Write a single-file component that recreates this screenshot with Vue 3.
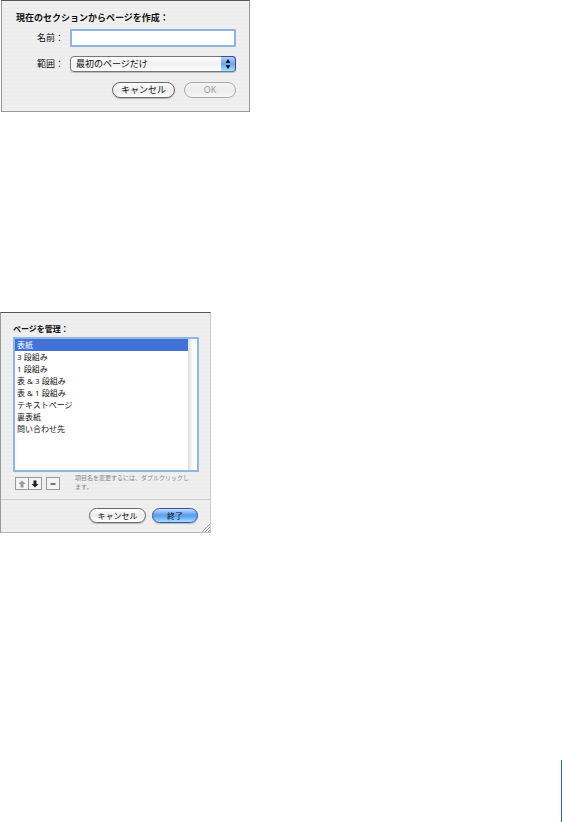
<template>
  <div class="page">
    <main class="sheets">
      <form class="sheet create-sheet" @submit.prevent>
        <h2 class="sheet-title">現在のセクションからページを作成：</h2>
        <div class="field">
          <label for="page-name">名前：</label>
          <input id="page-name" v-model="name" class="name-input" type="text" />
        </div>
        <div class="field range-field">
          <label for="page-range">範囲：</label>
          <div class="popup">
            <select id="page-range" v-model="range">
              <option v-for="item in ranges" :key="item">{{ item }}</option>
            </select>
            <svg class="popup-arrows" viewBox="0 0 14 14" aria-hidden="true">
              <path d="M7 2 9.3 5.8H4.7zM7 12 9.3 8.2H4.7z" />
            </svg>
          </div>
        </div>
        <div class="actions">
          <button class="btn cancel" type="button">キャンセル</button>
          <button class="btn" type="submit" :disabled="!name">OK</button>
        </div>
      </form>

      <section class="sheet manage-sheet">
        <h2 id="manage-title" class="sheet-title">ページを管理：</h2>
        <div class="list-box">
          <ul class="page-list" role="listbox" aria-labelledby="manage-title">
            <li
              v-for="(page, index) in pages"
              :key="page"
              role="option"
              :aria-selected="index === selected"
              :class="{ selected: index === selected }"
              @click="selected = index"
            >
              {{ page }}
            </li>
          </ul>
          <div class="scroll-track"></div>
        </div>
        <div class="tools">
          <div class="order-buttons">
            <button class="tool" type="button" aria-label="上へ" :disabled="selected === 0" @click="move(-1)">
              <svg viewBox="0 0 10 10"><path d="M5 1.5 8.5 5H6.5v3.5h-3V5h-2z" /></svg>
            </button>
            <button class="tool" type="button" aria-label="下へ" @click="move(1)">
              <svg viewBox="0 0 10 10"><path d="M5 8.5 8.5 5H6.5V1.5h-3V5h-2z" /></svg>
            </button>
          </div>
          <button class="tool" type="button" aria-label="削除" @click="remove">
            <svg viewBox="0 0 10 10"><path d="M2.5 4.4h5v1.2h-5z" /></svg>
          </button>
          <p class="hint">項目名を変更するには、ダブルクリックし<br />ます。</p>
        </div>
        <div class="actions">
          <button class="btn cancel" type="button">キャンセル</button>
          <button class="btn primary" type="button">終了</button>
        </div>
        <svg class="resizer" viewBox="0 0 8 8" aria-hidden="true">
          <path d="M0 8 8 0M3 8 8 3M6 8 8 6" />
        </svg>
      </section>
    </main>
    <div class="margin-rule"></div>
  </div>
</template>

<script setup>
import { ref } from 'vue'

const name = ref('')
const ranges = ['最初のページだけ', 'すべてのページ']
const range = ref(ranges[0])

const pages = ref([
  '表紙',
  '3 段組み',
  '1 段組み',
  '表 & 3 段組み',
  '表 & 1 段組み',
  'テキストページ',
  '裏表紙',
  '問い合わせ先'
])
const selected = ref(0)

const move = (step) => {
  const target = selected.value + step
  if (target < 0 || target >= pages.value.length) return
  const [page] = pages.value.splice(selected.value, 1)
  pages.value.splice(target, 0, page)
  selected.value = target
}

const remove = () => {
  pages.value.splice(selected.value, 1)
  selected.value = Math.max(0, Math.min(selected.value, pages.value.length - 1))
}
</script>

<style>
body {
  margin: 0;
  background: #fff;
}
</style>

<style scoped>
.page {
  display: flex;
  justify-content: space-between;
  min-height: 100vh;
  font-family: "Open Sans", "Noto Sans CJK JP", sans-serif;
  color: #111;
}

.sheets {
  display: flex;
  flex-direction: column;
  align-items: flex-start;
  gap: 200px;
}

.sheet {
  position: relative;
  box-sizing: border-box;
  max-width: 100%;
  border: 1px solid #999;
  border-top-color: #555;
  background: repeating-linear-gradient(#f0f0f0 0 2px, #ececec 2px 4px);
}

.sheet-title {
  margin: 0;
  font-size: inherit;
  line-height: 12px;
  font-weight: 700;
}

.create-sheet {
  width: 249px;
  margin-left: 1px;
  padding: 11px 13px 13px 14px;
  font-size: 9px;
}

/* 入力欄 */
.field {
  display: flex;
  align-items: center;
  margin-top: 5px;
  line-height: 12px;
}

.field label {
  width: 54px;
  padding-left: 21px;
  box-sizing: border-box;
  flex: none;
}

.name-input {
  flex: 1;
  min-width: 0;
  height: 18px;
  box-sizing: border-box;
  padding: 0 4px;
  border: 2px solid #8fb4de;
  border-radius: 1px;
  background: #fff;
  font: inherit;
  outline: none;
}

.range-field {
  margin-top: 9px;
}

.popup {
  position: relative;
  flex: 1;
  height: 16px;
}

.popup select {
  display: block;
  appearance: none;
  width: 100%;
  height: 16px;
  box-sizing: border-box;
  padding: 0 18px 0 5px;
  border: 1px solid #777;
  border-radius: 4px;
  background: linear-gradient(#fff, #f0f0f0 50%, #fff);
  box-shadow: 0 1px 1px #bbb;
  color: inherit;
  font: inherit;
}

.popup-arrows {
  position: absolute;
  top: 0;
  right: 0;
  width: 15px;
  height: 16px;
  box-sizing: border-box;
  border: 1px solid #3a4aa8;
  border-left: 0;
  border-bottom-color: #5f7fa8;
  border-radius: 0 4px 4px 0;
  background: linear-gradient(#b5d2f7, #66a6ee 50%, #a8e0ff);
  pointer-events: none;
}

/* ボタン */
.actions {
  display: flex;
  justify-content: flex-end;
  gap: 9px;
  margin-top: 10px;
}

.btn {
  width: 52px;
  height: 16px;
  padding: 0;
  border: 1px solid #666;
  border-radius: 8px;
  background: linear-gradient(#fff, #ececec 50%, #fff);
  box-shadow: 0 1px 1px #bbb;
  color: #111;
  font: inherit;
  line-height: 12px;
}

.btn.cancel {
  width: 63px;
}

.btn:disabled {
  border-color: #aaa;
  background: linear-gradient(#f5f5f5, #ececec 50%, #f7f7f7);
  box-shadow: none;
  color: #999;
}

.btn.primary {
  border-color: #3c4fa8;
  background: linear-gradient(#c8defa, #5c9fec 45%, #62a8f2 60%, #a6e0ff);
}

/* ページ管理 */
.manage-sheet {
  width: 211px;
  padding: 10px 12px 9px;
  border-right-color: #ccc;
  border-bottom-color: #bbb;
  font-size: 8px;
}

.list-box {
  display: flex;
  height: 135px;
  box-sizing: border-box;
  margin: 2px -1px 0 0;
  border: 2px solid #8db8e4;
  background: #fff;
}

.page-list {
  flex: 1;
  margin: 0;
  padding: 0;
  list-style: none;
}

.page-list li {
  padding-left: 2px;
  line-height: 12px;
}

.page-list .selected {
  background: #4272d8;
  color: #fff;
}

.scroll-track {
  width: 9px;
  background: linear-gradient(90deg, #ddd, #f8f8f8 50%, #fff);
}

.tools {
  display: flex;
  align-items: flex-start;
  margin: 5px -12px 0;
  padding: 0 12px 7px 14px;
  border-bottom: 1px solid #ccc;
}

.order-buttons {
  display: flex;
  margin-right: 4px;
}

.tool {
  display: flex;
  align-items: center;
  justify-content: center;
  width: 14px;
  height: 13px;
  padding: 0;
  border: 1px solid #999;
  background: #f4f4f4;
}

.tool + .tool {
  margin-left: -1px;
}

.tool svg {
  width: 10px;
  height: 10px;
  flex: none;
  fill: #222;
}

.tool:disabled svg {
  fill: #999;
}

.hint {
  margin: -3px 0 0 15px;
  color: #888;
  font-size: 6px;
  line-height: 9px;
  white-space: nowrap;
}

.manage-sheet .actions {
  gap: 6px;
  margin-top: 8px;
}

.manage-sheet .btn {
  width: 46px;
  height: 15px;
}

.manage-sheet .cancel {
  width: 57px;
}

.resizer {
  position: absolute;
  right: 0;
  bottom: 0;
  width: 8px;
  height: 8px;
  fill: none;
  stroke: #888;
  stroke-width: 0.8;
}

/* 右端の罫線 */
.margin-rule {
  align-self: flex-end;
  width: 1px;
  height: 62px;
  background: #1f70b8;
}
</style>
